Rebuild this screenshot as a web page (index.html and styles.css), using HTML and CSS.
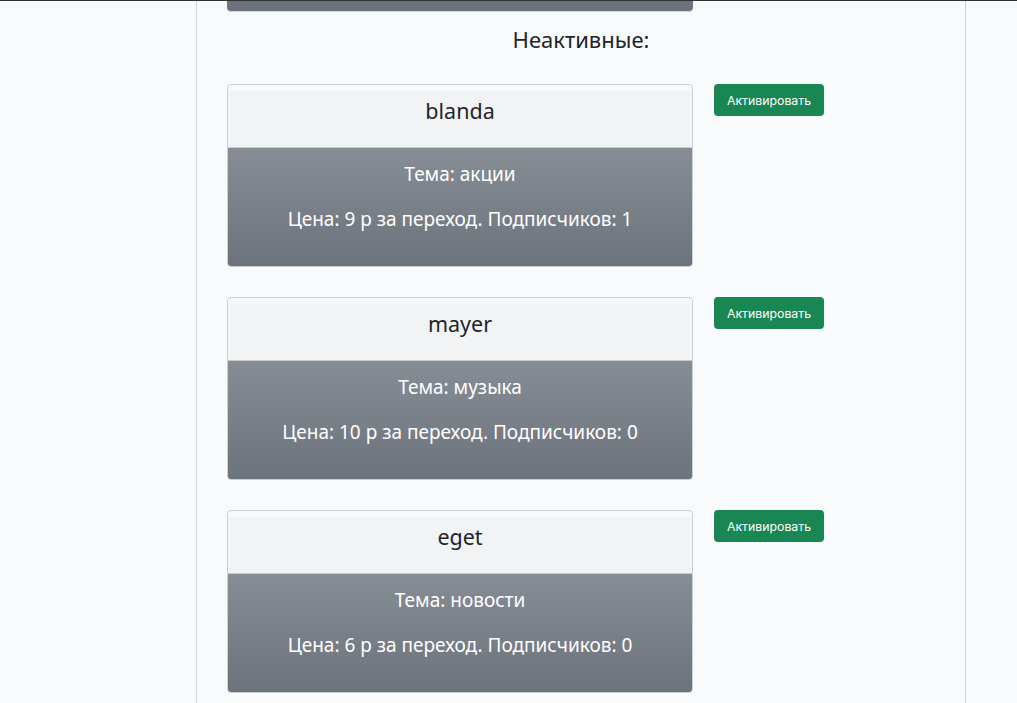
FILE: index.html
```html
<!DOCTYPE html>
<html lang="ru">
<head>
<meta charset="utf-8">
<link rel="stylesheet" href="styles.css">
</head>
<body>
<div class="topline"></div>
<div class="container">
  <div class="prev-card"></div>
  <h2 class="heading">Неактивные:</h2>

  <div class="row">
    <div class="card">
      <div class="card-header">blanda</div>
      <div class="card-body">
        <p>Тема: акции</p>
        <p>Цена: 9 р за переход. Подписчиков: 1</p>
      </div>
    </div>
    <button class="btn">Активировать</button>
  </div>

  <div class="row">
    <div class="card">
      <div class="card-header">mayer</div>
      <div class="card-body">
        <p>Тема: музыка</p>
        <p>Цена: 10 р за переход. Подписчиков: 0</p>
      </div>
    </div>
    <button class="btn">Активировать</button>
  </div>

  <div class="row">
    <div class="card">
      <div class="card-header">eget</div>
      <div class="card-body">
        <p>Тема: новости</p>
        <p>Цена: 6 р за переход. Подписчиков: 0</p>
      </div>
    </div>
    <button class="btn">Активировать</button>
  </div>
</div>
</body>
</html>
```
FILE: styles.css
```css
html, body {
  margin: 0;
  padding: 0;
  background: #f8fafc;
  font-family: "Noto Sans", "Open Sans", sans-serif;
  height: 703px;
  overflow: hidden;
}
.topline {
  position: absolute;
  top: 0;
  left: 0;
  right: 0;
  height: 1px;
  background: #2f3032;
}
.container {
  margin-left: 196px;
  width: 738px;
  border-left: 1px solid #cfd1d4;
  border-right: 1px solid #cfd1d4;
  min-height: 703px;
  padding-left: 30px;
  box-sizing: content-box;
}
.prev-card {
  width: 466px;
  height: 11px;
  background: #6c737c;
  border-radius: 0 0 4px 4px;
  box-shadow: 0 1px 1px rgba(0,0,0,0.15);
}
.heading {
  margin: 14px 0 0 -30px;
  text-align: center;
  font-weight: 400;
  font-size: 22px;
  line-height: 28px;
  color: #212529;
  height: 59px;
}
.row {
  display: flex;
  align-items: flex-start;
  gap: 21px;
  margin-bottom: 30px;
}
.card {
  width: 464px;
  border: 1px solid #cdd0d3;
  border-radius: 4px;
  background: #f8f9fb;
  padding-top: 6px;
  overflow: hidden;
}
.card-header {
  background: #f2f3f5;
  border-bottom: 1px solid #c6c9cd;
  text-align: center;
  font-size: 21.5px;
  line-height: 30px;
  padding-top: 5px;
  box-sizing: border-box;
  height: 57px;
  color: #212529;
}
.card-body {
  background: linear-gradient(to bottom, #878d94, #6c737c);
  color: #fff;
  text-align: center;
  font-size: 19px;
  padding: 13px 0 33px;
  height: 118px;
  box-sizing: border-box;
}
.card-body p {
  margin: 0 0 18px;
  line-height: 27px;
}
.card-body p:last-child {
  margin-bottom: 0;
}
.btn {
  width: 110px;
  height: 32px;
  border: none;
  border-radius: 4px;
  background: #198754;
  color: #fff;
  font-family: "Inter", "Open Sans", sans-serif;
  font-size: 12.3px;
  font-weight: 400;
  padding: 0;
  cursor: pointer;
}
```
